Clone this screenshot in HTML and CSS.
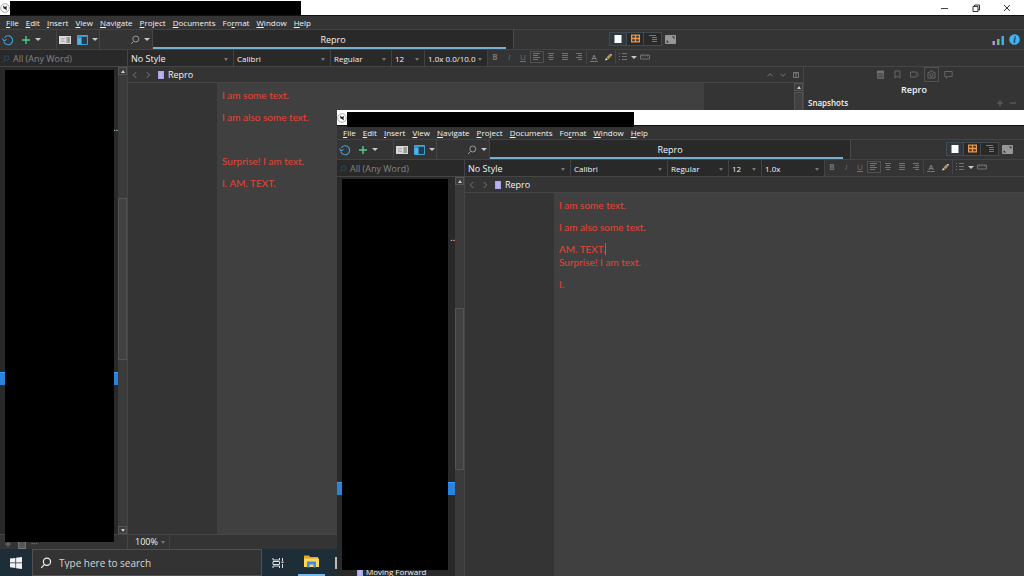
FILE: index.html
```html
<!DOCTYPE html>
<html lang="en">
<head>
<meta charset="utf-8">
<title>Repro</title>
<link rel="stylesheet" href="styles.css">
</head>
<body>
<svg class="defs" aria-hidden="true">
  <symbol id="logo" viewBox="0 0 10 10"><circle cx="5" cy="5" r="4.3" fill="#fff" stroke="#888" stroke-width=".7"/><path d="M3 2.500L5 4L7 3L6.500 5.500L7 7.500L5 6L3.500 5.500Z" fill="#222"/></symbol>
  <symbol id="sync" viewBox="0 0 12 12"><path d="M2.400 3.700A4.500 4.500 0 1 1 2 8M.5 4.500L2 7L4.600 5.400" fill="none" stroke="#3f9fd8" stroke-width="1.100"/></symbol>
  <symbol id="plus" viewBox="0 0 10 10"><path d="M5 1V9M1 5H9" stroke="currentColor" stroke-width="1.400"/></symbol>
  <symbol id="thin-plus" viewBox="0 0 10 10"><path d="M5 2V8M2 5H8" stroke="currentColor"/></symbol>
  <symbol id="thin-minus" viewBox="0 0 10 10"><path d="M2 5H8" stroke="currentColor"/></symbol>
  <symbol id="label-view" viewBox="0 0 12 8"><path d="M0 0H12V8H0Z" fill="#d8d8d8"/><path d="M7.500 1H11V7H7.500Z" fill="#999"/><path d="M2 2.500H6M2 4H5M2 5.500H6" stroke="#aaa" stroke-width=".8"/></symbol>
  <symbol id="panes" viewBox="0 0 12 10"><path d="M.5.5H10.500V9.500H.5Z" fill="#253c4b" stroke="#429fd3"/><path d="M.5 1.200H10.500M1 3H4V9H1Z" stroke="#4aabe0" stroke-width="1.300" fill="#54b8ef"/></symbol>
  <symbol id="search" viewBox="0 0 10 10"><path d="M3.600 6.400L1 9" stroke="currentColor"/><circle cx="5.800" cy="4" r="3" fill="none" stroke="currentColor"/></symbol>
  <symbol id="sheet" viewBox="0 0 8 8"><path d="M.5 0H7.500V8H.5Z" fill="#fff"/></symbol>
  <symbol id="cork" viewBox="0 0 8 8"><path d="M.5 1H7.500V7H.5ZM.5 4H7.500M4 1V7" fill="#49331f" stroke="#e59a4e" stroke-width="1.200"/></symbol>
  <symbol id="outline" viewBox="0 0 8 8"><path d="M0 .5H7M3 2.500H8M3 4.500H8M3 6.500H8" stroke="#777"/></symbol>
  <symbol id="compose" viewBox="0 0 11 9"><rect width="11" height="9" rx="1" fill="#979797"/><path d="M6.800 1.500H9.500V4ZM4.200 7.500H1.500V5Z" fill="#333"/></symbol>
  <symbol id="stats" viewBox="0 0 12 10"><path d="M.5 6H3V10H.5Z" fill="#b78df0"/><path d="M5 4H7.500V10H5Z" fill="#55c987"/><path d="M9.500 1H12V10H9.500Z" fill="#43aee8"/></symbol>
  <symbol id="info" viewBox="0 0 11 11"><circle cx="5.500" cy="5.500" r="5.300" fill="#3eb3f2"/><path d="M6.300 2.200L6 3.600M5 4.700H5.900L5.200 8H6.200" fill="none" stroke="#23465a" stroke-width="1.300"/></symbol>
  <symbol id="al" viewBox="0 0 8 8"><path d="M0 .5H7M0 2.500H5M0 4.500H7M0 6.500H5" stroke="currentColor"/></symbol>
  <symbol id="ac" viewBox="0 0 8 8"><path d="M1 .5H7M2 2.500H6M1 4.500H7M2 6.500H6" stroke="currentColor"/></symbol>
  <symbol id="aj" viewBox="0 0 8 8"><path d="M1 .5H7M1 2.500H7M1 4.500H7M1 6.500H7" stroke="currentColor"/></symbol>
  <symbol id="ar" viewBox="0 0 8 8"><path d="M1 .5H7M3 2.500H7M1 4.500H7M3 6.500H7" stroke="currentColor"/></symbol>
  <symbol id="pen" viewBox="0 0 8 8"><path d="M1 7.500L2 5L4 6.500Z" fill="#eee"/><path d="M2.500 4.500L4.500 6.200L7 3.500L5 1.800Z" fill="#b09a55"/><path d="M5.300 1.500L7.200 3.200L8 1Z" fill="#ddd"/></symbol>
  <symbol id="list" viewBox="0 0 8 8"><path d="M0 .5H1M3 .5H8M0 3.500H1M3 3.500H8M0 6.500H1M3 6.500H8" stroke="currentColor"/></symbol>
  <symbol id="ruler" viewBox="0 0 10 6"><path d="M.5 1H9.500V5H.5ZM2.500 1V2.500M5 1V2.500M7.500 1V2.500" fill="none" stroke="currentColor"/></symbol>
  <symbol id="left" viewBox="0 0 8 8"><path d="M5.300 1L2.300 4L5.300 7" fill="none" stroke="currentColor"/></symbol>
  <symbol id="right" viewBox="0 0 8 8"><path d="M2.700 1L5.700 4L2.700 7" fill="none" stroke="currentColor"/></symbol>
  <symbol id="up" viewBox="0 0 8 8"><path d="M1.500 5.300L4 2.700L6.500 5.300" fill="none" stroke="currentColor"/></symbol>
  <symbol id="down" viewBox="0 0 8 8"><path d="M1.500 2.700L4 5.300L6.500 2.700" fill="none" stroke="currentColor"/></symbol>
  <symbol id="split" viewBox="0 0 8 8"><path d="M1.500 1.500H6.500V6.500H1.500ZM4 1.500V6.500M1 2H7" fill="none" stroke="currentColor"/></symbol>
  <symbol id="doc" viewBox="0 0 8 8"><path d="M1 0H7V8H1Z" fill="#a9a5e6"/><path d="M2.500 2H5.500M2.500 4H5.500M2.500 6H5.500" stroke="#cbc9f5"/></symbol>
  <symbol id="notes" viewBox="0 0 9 9"><path d="M1.500 1H7.500V8.500H1.500Z" fill="#555" stroke="currentColor"/><path d="M1 2H8" stroke="#888"/></symbol>
  <symbol id="mark" viewBox="0 0 9 9"><path d="M2 1H7V8L4.500 6L2 8Z" fill="none" stroke="currentColor"/></symbol>
  <symbol id="tag" viewBox="0 0 9 9"><path d="M.5 2H6.500L8.500 4.500L6.500 7H.5Z" fill="none" stroke="currentColor"/><circle cx="6" cy="4.500" r=".7" fill="currentColor"/></symbol>
  <symbol id="camera" viewBox="0 0 9 9"><path d="M1 2.500H2.500L3.200 1H5.800L6.500 2.500H8V8H1Z" fill="none" stroke="currentColor"/><circle cx="4.500" cy="5" r="1.500" fill="none" stroke="currentColor"/></symbol>
  <symbol id="chat" viewBox="0 0 9 9"><path d="M.8 1.500H8.200V6.500H4L2.500 8.300V6.500H.8Z" fill="none" stroke="currentColor"/></symbol>
</svg>
<div class="desktop">
  <section class="window main-window">
    <header class="titlebar">
      <svg class="i10"><use href="#logo"/></svg><div class="title-mask"></div>
      <div class="controls">
        <button aria-label="Minimize"><svg viewBox="0 0 8 8"><path d="M0 4.500H7" stroke="#444"/></svg></button>
        <button aria-label="Restore"><svg viewBox="0 0 8 8"><path d="M1 2.500H6V7.500H1ZM2.500 2.500V1H7.500V6H6" fill="none" stroke="#333"/></svg></button>
        <button aria-label="Close"><svg viewBox="0 0 8 8"><path d="M1 1L7 7M7 1L1 7" stroke="#333"/></svg></button>
      </div>
    </header>
    <nav class="menu">
      <button><u>F</u>ile</button><button><u>E</u>dit</button><button><u>I</u>nsert</button><button><u>V</u>iew</button><button><u>N</u>avigate</button><button><u>P</u>roject</button><button><u>D</u>ocuments</button><button>Fo<u>r</u>mat</button><button><u>W</u>indow</button><button><u>H</u>elp</button>
    </nav>
    <div class="toolbar">
      <div class="tools add-tools"><button aria-label="Sync"><svg class="i12"><use href="#sync"/></svg></button><button class="green" aria-label="Add"><svg class="i10"><use href="#plus"/></svg></button><button class="caret" aria-label="Add options"></button></div>
      <div class="tools view-tools"><button aria-label="Labels"><svg class="i12"><use href="#label-view"/></svg></button><button aria-label="Layout"><svg class="i12"><use href="#panes"/></svg></button><button class="caret" aria-label="Layout options"></button></div>
      <div class="tools find-tools"><button aria-label="Find"><svg class="i10"><use href="#search"/></svg></button><button class="caret" aria-label="Find options"></button></div>
      <button class="tab">Repro</button>
      <div class="modes"><button class="on" aria-label="Document"><svg class="i8"><use href="#sheet"/></svg></button><button aria-label="Corkboard"><svg class="i9"><use href="#cork"/></svg></button><button aria-label="Outline"><svg class="i8"><use href="#outline"/></svg></button></div>
      <button aria-label="Compose"><svg class="compose"><use href="#compose"/></svg></button>
      <div class="end-tools"><button aria-label="Statistics"><svg class="i12"><use href="#stats"/></svg></button><button aria-label="Inspector"><svg class="i11"><use href="#info"/></svg></button></div>
    </div>
    <div class="workspace">
      <aside class="binder">
        <label class="filter"><svg class="i8"><use href="#search"/></svg><input type="text" placeholder="All (Any Word)" aria-label="Search binder"></label>
        <div class="binder-body">
          <div class="items"><div class="more">..</div><div class="selected"></div></div>
          <div class="scroll"><button aria-label="Scroll up" class="arrow-up"></button><div class="thumb"></div><button aria-label="Scroll down" class="arrow-down"></button></div>
        </div>
        <footer class="binder-foot"><svg class="i10"><use href="#thin-plus"/></svg><svg class="i10"><use href="#notes"/></svg><span>•••</span></footer>
        <div class="binder-mask"></div>
      </aside>
      <div class="work">
        <div class="format">
          <div class="combo style"><select aria-label="Style"><option>No Style</option></select></div>
          <div class="combo family"><select aria-label="Font"><option>Calibri</option></select></div>
          <div class="combo weight"><select aria-label="Variant"><option>Regular</option></select></div>
          <div class="combo size"><select aria-label="Size"><option>12</option></select></div>
          <div class="combo spacing"><select aria-label="Line spacing"><option>1.0x 0.0/10.0</option></select></div>
          <div class="group"><button><b>B</b></button><button><i>I</i></button><button><u>U</u></button><button class="boxed" aria-label="Align left"><svg class="i8"><use href="#al"/></svg></button><button aria-label="Center"><svg class="i8"><use href="#ac"/></svg></button><button aria-label="Justify"><svg class="i8"><use href="#aj"/></svg></button><button aria-label="Align right"><svg class="i8"><use href="#ar"/></svg></button></div>
          <div class="group"><button class="ink">A</button><button aria-label="Highlight"><svg class="i8"><use href="#pen"/></svg></button></div>
          <div class="group"><button aria-label="List"><svg class="i8"><use href="#list"/></svg></button><button class="caret" aria-label="List options"></button><button aria-label="Ruler"><svg class="i10"><use href="#ruler"/></svg></button></div>
        </div>
        <div class="content">
          <main class="editor">
            <div class="crumbs"><button aria-label="Back"><svg class="i8"><use href="#left"/></svg></button><button aria-label="Forward"><svg class="i8"><use href="#right"/></svg></button><svg class="i8"><use href="#doc"/></svg><span class="name">Repro</span><div class="crumb-end"><button aria-label="Previous"><svg class="i8"><use href="#up"/></svg></button><button aria-label="Next"><svg class="i8"><use href="#down"/></svg></button><button aria-label="Split"><svg class="i8"><use href="#split"/></svg></button></div></div>
            <div class="canvas">
              <article class="page"><p>I am some text.</p><p>I am also some text.</p><p>&nbsp;</p><p>Surprise! I am text.</p><p>I. AM. TEXT.</p></article>
              <div class="scroll"><button aria-label="Scroll up" class="arrow-up"></button><div class="thumb tall"></div></div>
            </div>
            <footer class="status"><div class="combo zoom"><select aria-label="Zoom"><option>100%</option></select></div></footer>
          </main>
          <aside class="inspector">
            <div class="inspect-tabs"><button aria-label="Notes"><svg class="i9"><use href="#notes"/></svg></button><button aria-label="Bookmarks"><svg class="i9"><use href="#mark"/></svg></button><button aria-label="Metadata"><svg class="i9"><use href="#tag"/></svg></button><button class="boxed" aria-label="Snapshots"><svg class="i9"><use href="#camera"/></svg></button><button aria-label="Comments"><svg class="i9"><use href="#chat"/></svg></button></div>
            <h1>Repro</h1>
            <div class="snap-head"><h2>Snapshots</h2><button aria-label="Take snapshot"><svg class="i10"><use href="#thin-plus"/></svg></button><button aria-label="Delete snapshot"><svg class="i10"><use href="#thin-minus"/></svg></button></div>
          </aside>
        </div>
      </div>
    </div>
  </section>

  <footer class="taskbar">
    <button class="start" aria-label="Start"><svg class="i12" viewBox="0 0 12 12"><path d="M0 1.600L5.400.9V5.600H0ZM6.100.8L12 0V5.600H6.100ZM0 6.300H5.400V11L0 10.300ZM6.100 6.300H12V12L6.100 11.200Z" fill="#f2f2f2"/></svg></button>
    <label class="task-search"><svg class="i12"><use href="#search"/></svg><input type="text" placeholder="Type here to search" aria-label="Type here to search"></label>
    <button class="task" aria-label="Task view"><svg class="i12" viewBox="0 0 12 12"><path d="M1 1V3H7.500V1M1 11V9H7.500V11M1 4.500H7.500V7.500H1ZM10.500 1V4M10.500 7V11" fill="none" stroke="#ddd"/><path d="M9.500 4.500H11.500V6H9.500Z" fill="#ddd"/></svg></button>
    <button class="task active" aria-label="File Explorer"><svg class="i15" viewBox="0 0 15 12"><path d="M0 0H5L6 1.500H14V11.500H0Z" fill="#e2a824"/><path d="M0 3H15V11.500H0Z" fill="#ffd65d"/><path d="M3 6H12V12H9.500V9H5.500V12H3Z" fill="#3b91d9"/></svg></button>
    <button class="task next-app" aria-label="App"></button>
  </footer>

  <section class="window front-window">
    <header class="titlebar"><svg class="i10"><use href="#logo"/></svg><div class="title-mask"></div></header>
    <nav class="menu">
      <button><u>F</u>ile</button><button><u>E</u>dit</button><button><u>I</u>nsert</button><button><u>V</u>iew</button><button><u>N</u>avigate</button><button><u>P</u>roject</button><button><u>D</u>ocuments</button><button>Fo<u>r</u>mat</button><button><u>W</u>indow</button><button><u>H</u>elp</button>
    </nav>
    <div class="toolbar">
      <div class="tools add-tools"><button aria-label="Sync"><svg class="i12"><use href="#sync"/></svg></button><button class="green" aria-label="Add"><svg class="i10"><use href="#plus"/></svg></button><button class="caret" aria-label="Add options"></button></div>
      <div class="tools view-tools"><button aria-label="Labels"><svg class="i12"><use href="#label-view"/></svg></button><button aria-label="Layout"><svg class="i12"><use href="#panes"/></svg></button><button class="caret" aria-label="Layout options"></button></div>
      <div class="tools find-tools"><button aria-label="Find"><svg class="i10"><use href="#search"/></svg></button><button class="caret" aria-label="Find options"></button></div>
      <button class="tab">Repro</button>
      <div class="modes"><button class="on" aria-label="Document"><svg class="i8"><use href="#sheet"/></svg></button><button aria-label="Corkboard"><svg class="i9"><use href="#cork"/></svg></button><button aria-label="Outline"><svg class="i8"><use href="#outline"/></svg></button></div>
      <button aria-label="Compose"><svg class="compose"><use href="#compose"/></svg></button>
    </div>
    <div class="workspace">
      <aside class="binder">
        <label class="filter"><svg class="i8"><use href="#search"/></svg><input type="text" placeholder="All (Any Word)" aria-label="Search binder"></label>
        <div class="binder-body">
          <div class="items"><div class="more">..</div><div class="selected"></div><div class="item"><svg class="i8"><use href="#doc"/></svg>Moving Forward</div></div>
          <div class="scroll"><button aria-label="Scroll up" class="arrow-up"></button><div class="thumb"></div></div>
        </div>
        <div class="binder-mask"></div>
      </aside>
      <div class="work">
        <div class="format">
          <div class="combo style"><select aria-label="Style"><option>No Style</option></select></div>
          <div class="combo family"><select aria-label="Font"><option>Calibri</option></select></div>
          <div class="combo weight"><select aria-label="Variant"><option>Regular</option></select></div>
          <div class="combo size"><select aria-label="Size"><option>12</option></select></div>
          <div class="combo spacing"><select aria-label="Line spacing"><option>1.0x</option></select></div>
          <div class="group"><button><b>B</b></button><button><i>I</i></button><button><u>U</u></button><button class="boxed" aria-label="Align left"><svg class="i8"><use href="#al"/></svg></button><button aria-label="Center"><svg class="i8"><use href="#ac"/></svg></button><button aria-label="Justify"><svg class="i8"><use href="#aj"/></svg></button><button aria-label="Align right"><svg class="i8"><use href="#ar"/></svg></button></div>
          <div class="group"><button class="ink">A</button><button aria-label="Highlight"><svg class="i8"><use href="#pen"/></svg></button></div>
          <div class="group"><button aria-label="List"><svg class="i8"><use href="#list"/></svg></button><button class="caret" aria-label="List options"></button><button aria-label="Ruler"><svg class="i10"><use href="#ruler"/></svg></button></div>
        </div>
        <div class="content">
          <main class="editor">
            <div class="crumbs"><button aria-label="Back"><svg class="i8"><use href="#left"/></svg></button><button aria-label="Forward"><svg class="i8"><use href="#right"/></svg></button><svg class="i8"><use href="#doc"/></svg><span class="name">Repro</span></div>
            <div class="canvas">
              <article class="page"><p>I am some text.</p><p>I am also some text.</p><p class="tight">AM. TEXT.<span class="cursor"></span></p><p>Surprise! I am text.</p><p>I.</p></article>
            </div>
          </main>
        </div>
      </div>
    </div>
  </section>
</div>
</body>
</html>
```

FILE: styles.css
```css
* { box-sizing: border-box; }
body { margin: 0; font: 9px/12px "Open Sans", "Noto Sans", sans-serif; color: #f2f2f2; background: #343434; }
button, input, select { font: inherit; color: inherit; background: none; border: 0; padding: 0; margin: 0; }
button { display: flex; align-items: center; justify-content: center; flex: none; }
svg { display: block; flex: none; }
.defs { position: absolute; width: 0; height: 0; }
.i8 { width: 8px; height: 8px; }
.i9 { width: 9px; height: 9px; }
.i10 { width: 10px; height: 10px; }
.i11 { width: 11px; height: 11px; }
.i12 { width: 12px; height: 12px; }
.i15 { width: 15px; height: 13px; }
.compose { width: 11px; height: 9px; }

.desktop { position: relative; display: flex; flex-direction: column; height: 100vh; overflow: hidden; }
.window { display: flex; flex-direction: column; background: #343434; }
.main-window { flex: 1; min-height: 0; }
.front-window { position: absolute; left: 337px; top: 110px; right: 0; bottom: 0; overflow: hidden; }

.titlebar { position: relative; display: flex; align-items: center; height: 16px; background: #fff; border-bottom: 1px solid #111; flex: none; }
.title-mask { position: absolute; left: 10px; top: 1px; width: 291px; height: 14px; background: #000; }
.front-window .title-mask { top: 2px; width: 287px; height: 15px; }
.controls { display: flex; margin-left: auto; padding-right: 2px; }
.controls button { width: 31px; }
.controls svg { width: 8px; height: 8px; }

.menu { display: flex; gap: 7px; padding: 0 6px; height: 13px; font-size: 8px; flex: none; }
.menu u { text-underline-offset: 1px; }

.toolbar { display: flex; align-items: center; height: 21px; border-top: 1px solid #434343; border-bottom: 1px solid #434343; flex: none; }
.tools { display: flex; align-items: center; height: 100%; border-right: 1px solid #454545; }
.add-tools { width: 57px; padding-left: 2px; gap: 7px; }
.view-tools { width: 43px; padding-left: 2px; gap: 6px; }
.find-tools { width: 53px; padding-left: 30px; gap: 7px; color: #999; }
.tools .caret { margin-left: -3px; }
.green { color: #4fd08a; }
.caret::before { content: ""; border: 3px solid transparent; border-top-color: #c8c8c8; border-bottom: 0; }
.tab { position: relative; width: 361px; height: 100%; background: #292929; border-right: 1px solid #4a4a4a; }
.tab::after { content: ""; position: absolute; left: 0; right: 7px; bottom: 0; height: 2px; background: #78afd0; }
.modes { display: flex; margin: 0 3px 2px 95px; height: 14px; border: 1px solid #424b52; background: #292929; }
.modes button { width: 17px; border-right: 1px solid #424b52; }
.modes button:last-child { border-right: 0; }
.modes .on { background: #303940; }
.end-tools { display: flex; gap: 5px; margin-left: auto; padding-right: 4px; }

.workspace { display: flex; flex: 1; min-height: 0; }
.binder { position: relative; display: flex; flex-direction: column; width: 128px; border-right: 1px solid #454545; flex: none; }
.filter { display: flex; align-items: center; gap: 3px; height: 17px; padding: 2px 0 0 2px; background: #292929; border-bottom: 1px solid #454545; color: #28516b; flex: none; }
.filter input { flex: 1; min-width: 0; color: #858585; }
input::placeholder { color: inherit; opacity: 1; }
.binder-body { display: flex; flex: 1; min-height: 0; }
.items { flex: 1; background: #292929; min-width: 0; }
.more { height: 305px; padding-top: 55px; text-align: right; }
.selected { height: 13px; background: #2a83dc; border-top: 1px solid #3b9aff; }
.item { display: flex; align-items: center; gap: 2px; margin-top: 71px; padding-left: 19px; font-size: 8px; white-space: nowrap; }
.scroll { display: flex; flex-direction: column; width: 9px; background: #3b3b3b; flex: none; }
.scroll button { height: 8px; border: 1px solid #555; }
.arrow-up::before { content: ""; border: 2px solid transparent; border-bottom: 3px solid #ccc; border-top: 0; }
.arrow-down::before { content: ""; border: 2px solid transparent; border-top: 3px solid #ccc; border-bottom: 0; }
.thumb { height: 162px; margin: 123px 0 auto; background: #414141; border: 1px solid #535353; flex: none; }
.tall { height: auto; margin: 1px 0 0; flex: 1; }
.binder-foot { display: flex; align-items: center; gap: 4px; height: 15px; padding: 3px 3px 0; border-top: 1px solid #454545; color: #777; font-size: 6px; flex: none; }
.binder-mask { position: absolute; left: 5px; top: 20px; bottom: 7px; width: 109px; background: #000; }
.front-window .binder-mask { top: 19px; bottom: 6px; width: 106px; }

.work { display: flex; flex-direction: column; flex: 1; min-width: 0; }
.format { display: flex; height: 17px; border-bottom: 1px solid #454545; color: #727272; flex: none; }
.combo { display: flex; align-items: center; background: #292929; color: #f2f2f2; border-right: 1px solid #434343; padding: 2px 5px 0 3px; font-size: 8px; }
.combo select { flex: 1; min-width: 0; appearance: none; outline: 0; }
.combo::after { content: ""; border: 2px solid transparent; border-top: 3px solid #777; border-bottom: 0; }
.style { width: 106px; font-size: 9px; }
.family { width: 97px; }
.weight { width: 61px; }
.size { width: 33px; }
.spacing { width: 63px; }
.group { display: flex; align-items: center; height: 14px; border-right: 1px solid #444; font-size: 8px; }
.group:last-child { border-right: 0; }
.group button { width: 14px; height: 12px; }
.group .caret { width: 8px; }
.boxed { border: 1px solid #505050; }
.group .ink { color: #999; border: 0 solid transparent; border-width: 0 3px; background: linear-gradient(#e0483c, #e0483c) 0 10px / 100% 1px no-repeat padding-box; }

.content { display: flex; flex: 1; min-height: 0; }
.editor { display: flex; flex-direction: column; flex: 1; min-width: 0; }
.crumbs { display: flex; align-items: center; gap: 5px; height: 16px; padding-left: 3px; border-bottom: 1px solid #454545; color: #777; flex: none; }
.name { color: #f2f2f2; margin-left: -2px; padding-top: 1px; }
.crumb-end { display: flex; gap: 5px; margin-left: auto; padding-right: 3px; }
.canvas { display: flex; flex: 1; min-height: 0; padding-left: 89px; background: #343434; }
.page { flex: 1; padding: 6px 5px; background: #404040; color: #e84335; font: 10px/13px Lato, "Open Sans", sans-serif; }
.page p { margin: 0 0 9px; }
.page .tight { margin: 0; }
.canvas .scroll { margin-left: 90px; }
.cursor { border-left: 1px solid #e84335; }
.status { height: 15px; display: flex; border-top: 1px solid #454545; flex: none; }
.zoom { width: 42px; background: none; padding: 0 4px 0 7px; font-size: 9px; }

.inspector { width: 221px; border-left: 1px solid #454545; flex: none; }
.inspect-tabs { display: flex; justify-content: center; gap: 2px; height: 15px; color: #666; }
.inspect-tabs button { width: 15px; }
.inspector h1 { margin: 2px 0 1px; font-size: 9px; font-weight: 600; text-align: center; }
.snap-head { display: flex; align-items: center; gap: 3px; padding: 0 6px 0 4px; color: #666; }
.snap-head h2 { flex: 1; margin: 0; font-size: 8px; font-weight: 600; color: #f2f2f2; }

.taskbar { display: flex; height: 27px; background: #1d2e38; flex: none; }
.start { width: 32px; }
.task-search { display: flex; align-items: center; gap: 7px; width: 230px; padding-left: 7px; background: #333; border: 1px solid #505050; }
.task-search input { flex: 1; min-width: 0; font-size: 10px; color: #d5d5d5; }
.task { width: 31px; }
.active { width: 27px; margin: 0 5px; border-bottom: 2px solid #76b9ed; }
.next-app { justify-content: flex-start; padding-left: 5px; }
.next-app::before { content: ""; width: 2px; height: 12px; background: #bbb; }
```
